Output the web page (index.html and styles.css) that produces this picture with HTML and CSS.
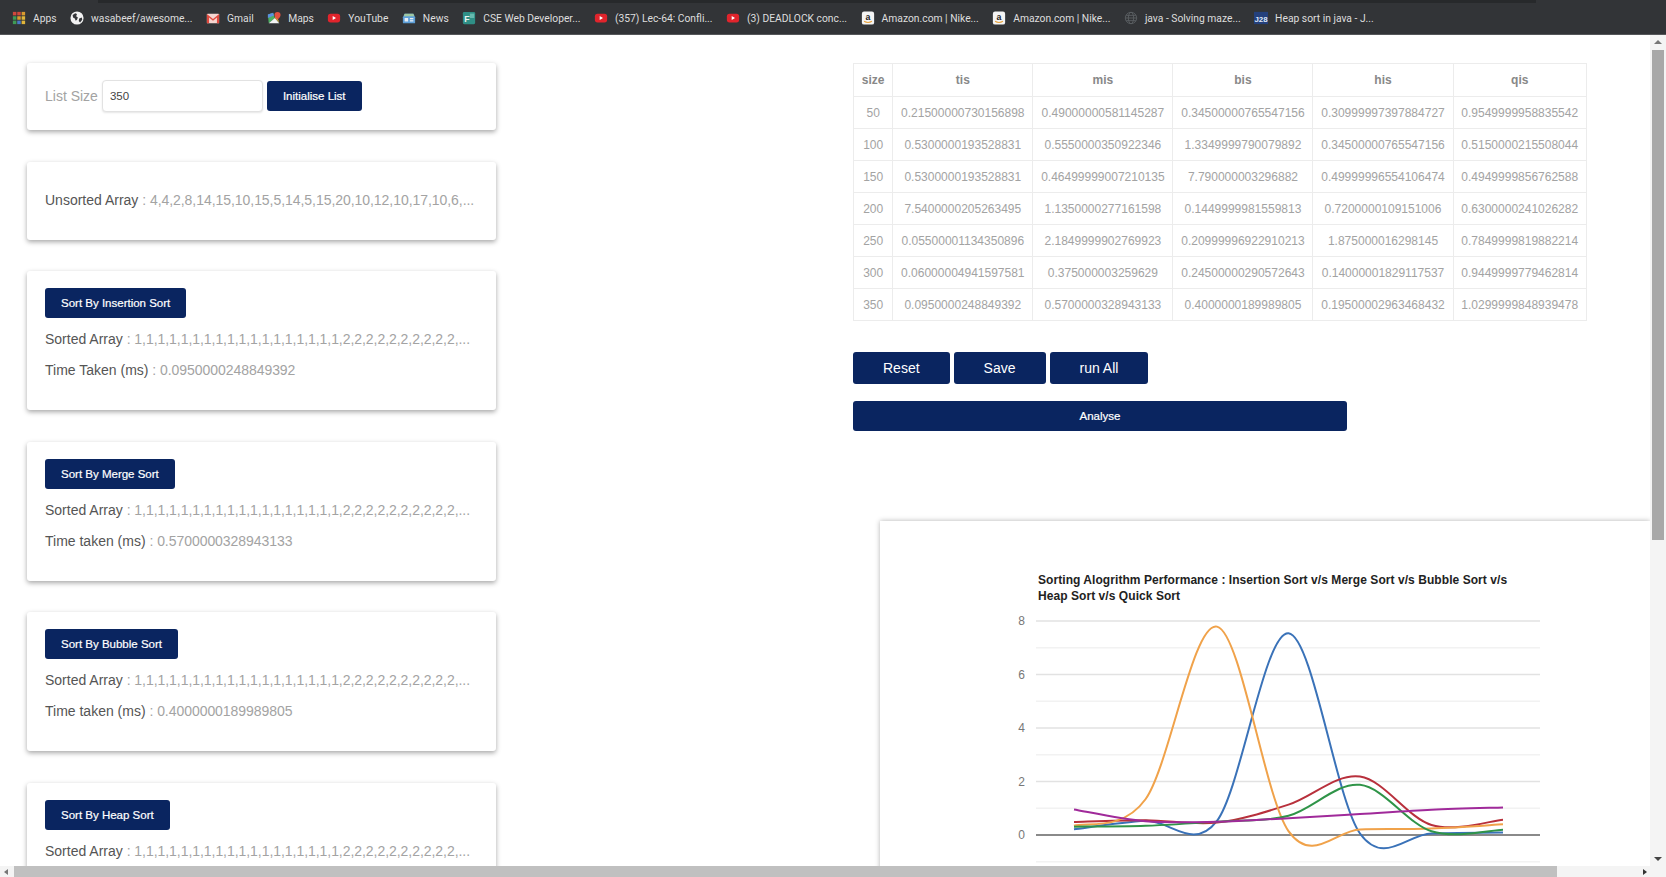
FILE: index.html
```html
<!DOCTYPE html>
<html lang="en">
<head>
    <meta charset="UTF-8">
    <meta name="viewport" content="width=device-width, initial-scale=1.0">
    <title>Sorting Algorithm Performance</title>
    <link rel="stylesheet" href="styles.css">
</head>
<body>
    <svg class="icon-defs" aria-hidden="true">
        <symbol id="yt" viewBox="0 0 16 16">
            <rect x="1" y="3" width="14" height="10" rx="3" fill="#e0242c"/>
            <path d="M6.5 5.8v4.4l3.8-2.2z" fill="#fff"/>
        </symbol>
        <symbol id="amazon" viewBox="0 0 16 16">
            <rect x="1" y="0.5" width="14" height="15" rx="2.5" fill="#f4f4f4"/>
            <text x="8" y="10" text-anchor="middle" font-family="Liberation Sans" font-weight="700" font-size="10" fill="#222">a</text>
            <path d="M3.5 11.8c3 1.8 6 1.8 9 0" fill="none" stroke="#e8a33d" stroke-width="1.3"/>
        </symbol>
    </svg>

    <div class="window">
        <div class="bookmarks">
            <div class="bar-edge"></div>
            <div class="bookmark-row">
                <span class="bookmark">
                    <svg class="favicon" viewBox="0 0 16 16">
                        <rect x="1" y="1" width="4" height="4" fill="#d1483c"/><rect x="6" y="1" width="4" height="4" fill="#d1483c"/><rect x="11" y="1" width="4" height="4" fill="#d99a2e"/>
                        <rect x="1" y="6" width="4" height="4" fill="#3f9b55"/><rect x="6" y="6" width="4" height="4" fill="#d99a2e"/><rect x="11" y="6" width="4" height="4" fill="#e0b53a"/>
                        <rect x="1" y="11" width="4" height="4" fill="#3f9b55"/><rect x="6" y="11" width="4" height="4" fill="#4a78c8"/><rect x="11" y="11" width="4" height="4" fill="#e0b53a"/>
                    </svg>Apps</span>
                <span class="bookmark">
                    <svg class="favicon" viewBox="0 0 16 16">
                        <circle cx="8" cy="8" r="7.5" fill="#f2f2f2"/>
                        <path d="M3 4.500l3-2 2 1-1 2.500 2 1.500-1 2.500-1.500 1-1-2.500-2-1zM10.500 8.500l3-1 .5 2.500-2.500 3-1.500-1.500z" fill="#35363a"/>
                    </svg>wasabeef/awesome...</span>
                <span class="bookmark">
                    <svg class="favicon" viewBox="0 0 16 16">
                        <rect x="1" y="3" width="14" height="11" rx="1" fill="#f6d5d0"/>
                        <path d="M1 3.500l7 5.500 7-5.500V14h-2.500V7.500L8 11 3.500 7.500V14H1z" fill="#e04a3f"/>
                    </svg>Gmail</span>
                <span class="bookmark">
                    <svg class="favicon" viewBox="0 0 16 16">
                        <path d="M1 4l6-2 2 6-7 6z" fill="#4caf62"/>
                        <path d="M2 14l7-6 5 6z" fill="#f4f4f4"/>
                        <path d="M9 8l2-3 3 8z" fill="#e8c23a"/>
                        <path d="M1 4l6-2 1 3-7 3z" fill="#5a8fe0"/>
                        <path d="M12 1a3.500 3.500 0 0 1 3.500 3.500C15.500 7 12 10 12 10S8.500 7 8.500 4.500A3.500 3.500 0 0 1 12 1z" fill="#e0503f"/>
                    </svg>Maps</span>
                <span class="bookmark"><svg class="favicon"><use href="#yt"/></svg>YouTube</span>
                <span class="bookmark">
                    <svg class="favicon" viewBox="0 0 16 16">
                        <path d="M3 3h10l2 4v6a1 1 0 0 1-1 1H2a1 1 0 0 1-1-1V7z" fill="#5d9fd8"/>
                        <path d="M3 3h10l1 3H2z" fill="#9fc7a0"/>
                        <rect x="3" y="8" width="4" height="4" fill="#e8eef5"/><rect x="9" y="8" width="4" height="1.500" fill="#e8eef5"/><rect x="9" y="10.500" width="4" height="1.500" fill="#e8eef5"/>
                    </svg>News</span>
                <span class="bookmark">
                    <svg class="favicon" viewBox="0 0 16 16">
                        <rect x="1" y="1" width="14" height="14" rx="1.500" fill="#2f8f86"/>
                        <rect x="9" y="3" width="5" height="5" fill="#66b9ae"/>
                        <text x="5.500" y="12" text-anchor="middle" font-family="Liberation Sans" font-weight="700" font-size="10" fill="#e8f4f2">F</text>
                    </svg>CSE Web Developer...</span>
                <span class="bookmark"><svg class="favicon"><use href="#yt"/></svg>(357) Lec-64: Confli...</span>
                <span class="bookmark"><svg class="favicon"><use href="#yt"/></svg>(3) DEADLOCK conc...</span>
                <span class="bookmark"><svg class="favicon"><use href="#amazon"/></svg>Amazon.com | Nike...</span>
                <span class="bookmark"><svg class="favicon"><use href="#amazon"/></svg>Amazon.com | Nike...</span>
                <span class="bookmark">
                    <svg class="favicon" viewBox="0 0 16 16" fill="none" stroke="#5c6063" stroke-width="1">
                        <circle cx="8" cy="8" r="6.500"/><ellipse cx="8" cy="8" rx="3" ry="6.500"/><path d="M1.500 8h13M2.500 5h11M2.500 11h11"/>
                    </svg>java - Solving maze...</span>
                <span class="bookmark">
                    <svg class="favicon" viewBox="0 0 16 16">
                        <rect x="0" y="1" width="16" height="14" fill="#24407c"/>
                        <text x="8" y="12" text-anchor="middle" font-family="Liberation Sans" font-weight="700" font-size="9" fill="#dfe8f8">J28</text>
                    </svg>Heap sort in java - J...</span>
            </div>
        </div>

        <div class="middle">
            <div class="page">
                <div class="left-col">
                    <div class="card card-size">
                        <label class="size-label" for="listSize">List Size</label>
                        <input class="size-input" id="listSize" type="text" value="350">
                        <button class="btn">Initialise List</button>
                    </div>

                    <div class="card">
                        <p class="line"><span class="key">Unsorted Array</span> : 4,4,2,8,14,15,10,15,5,14,5,15,20,10,12,10,17,10,6,...</p>
                    </div>

                    <div class="card">
                        <button class="btn">Sort By Insertion Sort</button>
                        <p class="line"><span class="key">Sorted Array</span> : 1,1,1,1,1,1,1,1,1,1,1,1,1,1,1,1,1,1,2,2,2,2,2,2,2,2,2,2,...</p>
                        <p class="line"><span class="key">Time Taken (ms)</span> : 0.0950000248849392</p>
                    </div>

                    <div class="card">
                        <button class="btn">Sort By Merge Sort</button>
                        <p class="line"><span class="key">Sorted Array</span> : 1,1,1,1,1,1,1,1,1,1,1,1,1,1,1,1,1,1,2,2,2,2,2,2,2,2,2,2,...</p>
                        <p class="line"><span class="key">Time taken (ms)</span> : 0.5700000328943133</p>
                    </div>

                    <div class="card">
                        <button class="btn">Sort By Bubble Sort</button>
                        <p class="line"><span class="key">Sorted Array</span> : 1,1,1,1,1,1,1,1,1,1,1,1,1,1,1,1,1,1,2,2,2,2,2,2,2,2,2,2,...</p>
                        <p class="line"><span class="key">Time taken (ms)</span> : 0.4000000189989805</p>
                    </div>

                    <div class="card">
                        <button class="btn">Sort By Heap Sort</button>
                        <p class="line"><span class="key">Sorted Array</span> : 1,1,1,1,1,1,1,1,1,1,1,1,1,1,1,1,1,1,2,2,2,2,2,2,2,2,2,2,...</p>
                    </div>
                </div>

                <div class="right-col">
                    <table class="results">
                        <tr><th>size</th><th>tis</th><th>mis</th><th>bis</th><th>his</th><th>qis</th></tr>
                        <tr><td>50</td><td>0.21500000730156898</td><td>0.49000000581145287</td><td>0.34500000765547156</td><td>0.30999997397884727</td><td>0.9549999958835542</td></tr>
                        <tr><td>100</td><td>0.5300000193528831</td><td>0.5550000350922346</td><td>1.3349999790079892</td><td>0.34500000765547156</td><td>0.5150000215508044</td></tr>
                        <tr><td>150</td><td>0.5300000193528831</td><td>0.46499999007210135</td><td>7.790000003296882</td><td>0.49999996554106474</td><td>0.4949999856762588</td></tr>
                        <tr><td>200</td><td>7.5400000205263495</td><td>1.1350000277161598</td><td>0.1449999981559813</td><td>0.7200000109151006</td><td>0.6300000241026282</td></tr>
                        <tr><td>250</td><td>0.05500001134350896</td><td>2.1849999902769923</td><td>0.20999996922910213</td><td>1.875000016298145</td><td>0.7849999819882214</td></tr>
                        <tr><td>300</td><td>0.06000004941597581</td><td>0.375000003259629</td><td>0.24500000290572643</td><td>0.14000001829117537</td><td>0.9449999779462814</td></tr>
                        <tr><td>350</td><td>0.0950000248849392</td><td>0.5700000328943133</td><td>0.4000000189989805</td><td>0.19500002963468432</td><td>1.0299999848939478</td></tr>
                    </table>

                    <div class="actions">
                        <button class="btn btn-big">Reset</button>
                        <button class="btn btn-big">Save</button>
                        <button class="btn btn-big">run All</button>
                    </div>
                    <button class="btn btn-wide">Analyse</button>

                    <div class="chart-card">
                        <svg class="chart" id="chart" width="770" height="400">
                            <text class="chart-title" x="158" y="63">Sorting Alogrithm Performance : Insertion Sort v/s Merge Sort v/s Bubble Sort v/s</text>
                            <text class="chart-title" x="158" y="79">Heap Sort v/s Quick Sort</text>
                        </svg>
                    </div>
                </div>
            </div>

            <div class="vbar">
                <div class="arrow-up"></div>
                <div class="vthumb"></div>
                <div class="arrow-down"></div>
            </div>
        </div>

        <div class="hbar">
            <div class="arrow-left"></div>
            <div class="hthumb"></div>
            <div class="arrow-right"></div>
        </div>
    </div>

    <script src="chart.js"></script>
</body>
</html>
```

FILE: styles.css
```css
body {
    margin: 0;
    overflow: hidden;
    font-family: "Liberation Sans", Arial, sans-serif;
    background-color: #fff;
    color: #a3a3a3;
}
.icon-defs {
    display: none;
}
.window {
    height: 100vh;
    display: flex;
    flex-direction: column;
}

/* bookmarks bar */
.bookmarks {
    flex: none;
    height: 35px;
    box-sizing: border-box;
    background-color: #323437;
    border-bottom: 1px solid #55575a;
}
.bar-edge {
    height: 3px;
    margin: 0 130px 0 98px;
    background-color: #27292b;
}
.bookmark-row {
    display: flex;
    gap: 13.5px;
    padding: 5px 0 0 12px;
}
.bookmark {
    display: flex;
    align-items: center;
    gap: 7px;
    height: 20px;
    font-family: Roboto, sans-serif;
    font-size: 10.3px;
    color: #dedede;
    white-space: nowrap;
}
.favicon {
    width: 14px;
    height: 14px;
    flex: none;
}

/* page */
.middle {
    flex: 1;
    min-height: 0;
    display: flex;
}
.page {
    flex: 1;
    min-width: 0;
    display: flex;
    align-items: flex-start;
    overflow: hidden;
}
.left-col {
    flex: none;
    width: 469px;
    margin: 28px 0 0 27px;
}
.right-col {
    flex: none;
    width: 797px;
    margin: 28px 0 0 357px;
}
.card {
    padding: 17px 18px 24px;
    margin-bottom: 31.5px;
    border-radius: 3px;
    background-color: #fff;
    box-shadow: 0 2px 5px rgba(0, 0, 0, 0.35);
}
.card-size {
    display: flex;
    align-items: center;
    gap: 3px;
    padding-bottom: 18px;
}
.size-label {
    font-size: 14px;
    color: #a3a3a3;
    margin-right: 1px;
}
.size-input {
    width: 161px;
    height: 32px;
    box-sizing: border-box;
    padding: 0 7px;
    border: 1px solid #e2e2e2;
    border-radius: 4px;
    box-shadow: 0 1px 2px rgba(0, 0, 0, 0.1);
    font-family: "Liberation Sans", Arial, sans-serif;
    font-size: 11.5px;
    color: #444;
}
.size-input + .btn {
    margin-left: 1px;
}
.line {
    height: 31px;
    margin: 0;
    font-size: 14px;
    line-height: 31px;
    letter-spacing: -0.05px;
    white-space: nowrap;
}
.card > .btn + .line,
.card > .line:first-child {
    margin-top: 6px;
}
.key {
    color: #555;
    letter-spacing: 0;
}
.btn {
    display: block;
    height: 30px;
    padding: 0 16px;
    border: none;
    border-radius: 3px;
    background-color: #0a2560;
    color: #fff;
    font-family: "Liberation Sans", Arial, sans-serif;
    font-size: 11.5px;
    -webkit-text-stroke: 0.2px #fff;
    cursor: pointer;
}

/* results table */
.results {
    border-collapse: collapse;
    font-size: 12px;
    color: #a3a3a3;
}
.results th,
.results td {
    height: 31px;
    padding: 0 7.8px;
    border: 1px solid #ececec;
    text-align: center;
    white-space: nowrap;
}
.results th {
    height: 32px;
    color: #888;
}
.actions {
    display: flex;
    gap: 4px;
    margin-top: 31px;
}
.btn-big {
    height: 32px;
    padding: 0 30px;
    font-size: 14px;
    -webkit-text-stroke: 0;
}
.btn-wide {
    width: 494px;
    margin-top: 17px;
}

/* chart */
.chart-card {
    margin: 90px 0 0 27px;
    height: 400px;
    background-color: #fff;
    box-shadow: 0 0 5px rgba(0, 0, 0, 0.3);
}
.chart {
    display: block;
}
.chart-title {
    font-size: 12px;
    font-weight: 700;
    letter-spacing: 0.06px;
    fill: #222;
}
.chart-label {
    font-size: 12px;
    fill: #777;
}

/* fake scrollbars */
.vbar {
    flex: none;
    width: 16px;
    position: relative;
    background-color: #f4f4f4;
}
.vthumb {
    height: 490px;
    margin: 15px 2px 0;
    background-color: #a8a8a8;
}
.arrow-up,
.arrow-down {
    position: absolute;
    left: 4px;
    width: 0;
    height: 0;
    border-left: 4px solid transparent;
    border-right: 4px solid transparent;
}
.arrow-up {
    top: 5px;
    border-bottom: 4px solid #777;
}
.arrow-down {
    bottom: 5px;
    border-top: 4px solid #444;
}
.hbar {
    flex: none;
    height: 11px;
    display: flex;
    align-items: stretch;
    background-color: #f4f4f4;
}
.hthumb {
    width: 1543px;
    background-color: #c0c0c0;
}
.arrow-left,
.arrow-right {
    width: 0;
    height: 0;
    align-self: center;
    border-top: 3px solid transparent;
    border-bottom: 3px solid transparent;
}
.arrow-left {
    margin: 0 6px 0 4px;
    border-right: 4px solid #777;
}
.arrow-right {
    margin-left: 86px;
    border-left: 4px solid #333;
}
```

FILE: chart.js
```js
// same numbers as the table, one line per algorithm
const series = [
    { color: '#3a72b8', values: [0.215, 0.53, 0.53, 7.54, 0.055, 0.06, 0.095] },
    { color: '#b8303c', values: [0.49, 0.555, 0.465, 1.135, 2.185, 0.375, 0.57] },
    { color: '#f0a24a', values: [0.345, 1.335, 7.79, 0.145, 0.21, 0.245, 0.4] },
    { color: '#2f9448', values: [0.31, 0.345, 0.5, 0.72, 1.875, 0.14, 0.195] },
    { color: '#a02a9a', values: [0.955, 0.515, 0.495, 0.63, 0.785, 0.945, 1.03] }
];

const svg = document.getElementById('chart');
const ns = 'http://www.w3.org/2000/svg';
const zeroY = 314;
const unit = 26.75;
const startX = 194;
const stepX = 71.5;

function add(tag, attrs, text) {
    const el = document.createElementNS(ns, tag);
    for (const key in attrs) el.setAttribute(key, attrs[key]);
    if (text !== undefined) el.textContent = text;
    svg.appendChild(el);
}

for (let v = -1; v <= 8; v++) {
    const y = zeroY - v * unit;
    let stroke = '#f2f2f2';
    if (v === 0) stroke = '#8a8a8a';
    else if (v % 2 === 0) stroke = '#e2e2e2';
    add('line', { x1: 156, x2: 660, y1: y, y2: y, stroke: stroke, 'stroke-width': v === 0 ? 2 : 1.5 });
    if (v >= 0 && v % 2 === 0) {
        add('text', { class: 'chart-label', x: 145, y: y + 4, 'text-anchor': 'end' }, v);
    }
}

// catmull-rom curve through the points
function curve(values) {
    const pts = values.map((v, i) => [startX + i * stepX, zeroY - v * unit]);
    let d = `M${pts[0][0]} ${pts[0][1]}`;
    for (let i = 0; i < pts.length - 1; i++) {
        const p0 = pts[Math.max(i - 1, 0)];
        const p1 = pts[i];
        const p2 = pts[i + 1];
        const p3 = pts[Math.min(i + 2, pts.length - 1)];
        const c1x = p1[0] + (p2[0] - p0[0]) / 6;
        const c1y = p1[1] + (p2[1] - p0[1]) / 6;
        const c2x = p2[0] - (p3[0] - p1[0]) / 6;
        const c2y = p2[1] - (p3[1] - p1[1]) / 6;
        d += ` C${c1x} ${c1y} ${c2x} ${c2y} ${p2[0]} ${p2[1]}`;
    }
    return d;
}

for (const s of series) {
    add('path', { d: curve(s.values), fill: 'none', stroke: s.color, 'stroke-width': 2 });
}
```
